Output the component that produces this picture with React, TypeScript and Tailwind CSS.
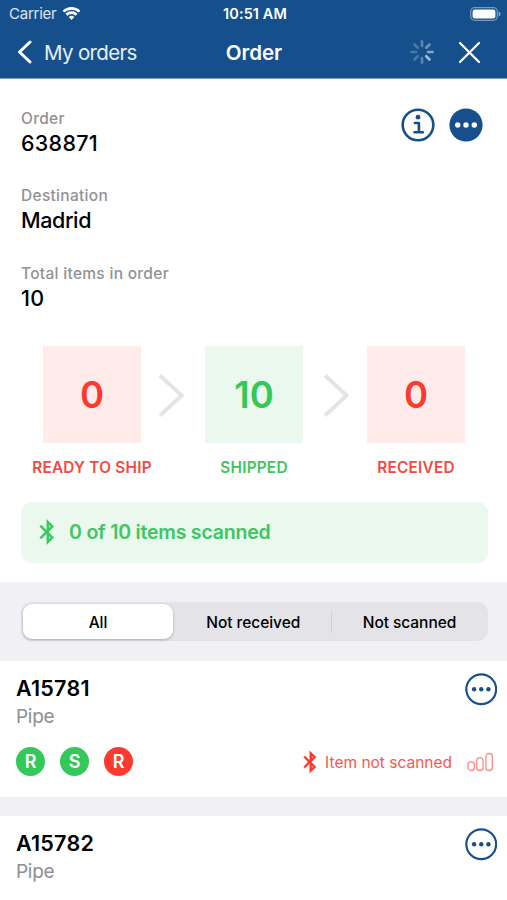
import React from "react";

type Tone = "red" | "green";

function Wifi() {
  return (
    <svg width="19" height="15" viewBox="0 0 20 15" fill="none" stroke="white" strokeWidth="2.7">
      <path d="M1.6 5.6a11.9 11.9 0 0 1 16.8 0" />
      <path d="M4.7 8.8a7.5 7.5 0 0 1 10.6 0" />
      <path d="M10 14.3 7 11.3a4.3 4.3 0 0 1 6 0Z" fill="white" stroke="none" />
    </svg>
  );
}

function Battery() {
  return (
    <svg width="31" height="14" viewBox="0 0 31 14" fill="none">
      <rect x="0.7" y="0.7" width="26.6" height="12.6" rx="4" stroke="white" strokeOpacity="0.42" strokeWidth="1.3" />
      <rect x="2.6" y="2.5" width="22.8" height="9" rx="2.2" fill="white" />
      <path d="M28.7 4.5v5c1.3-.5 1.9-1.3 1.9-2.5S30 5 28.7 4.5Z" fill="white" fillOpacity="0.5" />
    </svg>
  );
}

const SPOKES = [0.3, 0.38, 0.5, 0.62, 0.3, 0.24, 0.24, 0.24];

function Spinner() {
  return (
    <svg width="26" height="26" viewBox="-13 -13 26 26" stroke="white" strokeWidth="2.7" strokeLinecap="round">
      {SPOKES.map((o, i) => (
        <line key={i} x1="0" y1="-6" x2="0" y2="-10.6" strokeOpacity={o} transform={`rotate(${i * 45})`} />
      ))}
    </svg>
  );
}

function Bluetooth({ w, h, color, sw }: { w: number; h: number; color: string; sw: number }) {
  return (
    <svg width={w} height={h} viewBox="0 0 14 24" fill="none" stroke={color} strokeWidth={sw}>
      <path d="M1.2 6.5 11.6 16.9 7.7 20.7V3.3L11.6 7.1 1.2 17.5" />
    </svg>
  );
}

function Dots({ filled, size }: { filled?: boolean; size: number }) {
  const ink = filled ? "white" : "#15508d";
  const pitch = filled ? 8.3 : 7.5;
  return (
    <svg width={size} height={size} viewBox="0 0 34 34">
      <circle cx="17" cy="17" r={filled ? 16.6 : 15.6} fill={filled ? "#15508d" : "none"} stroke="#15508d" strokeWidth={filled ? 0 : 2.3} />
      {[-1, 0, 1].map((n) => (
        <circle key={n} cx={17 + n * pitch} cy="17" r={filled ? 2.7 : 2.3} fill={ink} />
      ))}
    </svg>
  );
}

function Info() {
  return (
    <svg width="34" height="34" viewBox="0 0 34 34" fill="none" stroke="#15508d">
      <circle cx="17" cy="17" r="15.3" strokeWidth="2.6" />
      <circle cx="17" cy="9.2" r="2.4" fill="#15508d" stroke="none" />
      <path d="M13.9 15h4v9.3M13.5 24.3h8.3" strokeWidth="2.6" strokeLinejoin="round" strokeLinecap="round" />
    </svg>
  );
}

function Field({ label, value }: { label: string; value: string }) {
  const numeric = /^\d+$/.test(value);
  return (
    <div className="h-[77.3px]">
      <div className="h-[22px] text-[15.5px] leading-[24px] font-medium tracking-[0.3px] text-[#929292]">{label}</div>
      <div className={`h-7 text-[21.5px] leading-[28px] font-medium text-black ${numeric ? "tracking-[0.3px]" : "tracking-[-0.4px]"}`}>{value}</div>
    </div>
  );
}

function Stage({ value, label, tone }: { value: string; label: string; tone: Tone }) {
  const red = tone === "red";
  return (
    <div className="flex w-[98px] shrink-0 flex-col items-center">
      <div className={`flex h-[97.5px] w-[98px] items-center justify-center pt-[3px] text-[36.5px] font-semibold ${red ? "bg-[#ffebea] text-[#fb3b30]" : "bg-[#eaf8ed] text-[#34c759]"}`}>
        {value}
      </div>
      <div className={`mt-[13px] text-[15.3px] leading-[23px] font-semibold tracking-[0.25px] whitespace-nowrap ${red ? "text-[#f24a41]" : "text-[#3cc65d]"}`}>{label}</div>
    </div>
  );
}

function Arrow({ className }: { className: string }) {
  return (
    <svg className={`mt-[28.5px] shrink-0 ${className}`} width="26" height="43" viewBox="0 0 26 43" fill="none" stroke="#e4e4e7" strokeWidth="3.8">
      <path d="M2 1.5 23.7 21.5 2 41.5" />
    </svg>
  );
}

function Badge({ letter, tone }: { letter: string; tone: Tone }) {
  return (
    <div className={`flex h-[29px] w-[29px] items-center justify-center rounded-full text-[18px] font-semibold text-white ${tone === "red" ? "bg-[#fc3a30]" : "bg-[#34c759]"}`}>
      {letter}
    </div>
  );
}

function Status() {
  return (
    <div className="mt-[18px] flex items-center justify-between pr-[3px]">
      <div className="flex gap-[15px]">
        <Badge letter="R" tone="green" />
        <Badge letter="S" tone="green" />
        <Badge letter="R" tone="red" />
      </div>
      <div className="flex items-center">
        <Bluetooth w={14} h={24} color="#fb3b30" sw={2.4} />
        <span className="ml-2 pt-[2px] text-[15.5px] text-[#f65850]">Item not scanned</span>
        <svg className="ml-[15px]" width="27" height="20" viewBox="0 0 27 20" fill="none" stroke="#fb8b85" strokeWidth="1.3">
          <rect x="1" y="9.8" width="6.4" height="8.7" rx="3.1" />
          <rect x="9.7" y="5.7" width="6.4" height="12.8" rx="3.1" />
          <rect x="18.9" y="1.5" width="6.4" height="17" rx="3.1" />
        </svg>
      </div>
    </div>
  );
}

function Item({ code, status }: { code: string; status?: boolean }) {
  return (
    <section className="h-[136px] shrink-0 bg-white pt-3 pr-[10px] pl-4">
      <div className="flex justify-between">
        <div>
          <div className="h-8 text-[21.5px] leading-[30px] font-semibold tracking-[0.25px] text-black">{code}</div>
          <div className="h-6 text-[19px] leading-6 tracking-[-0.3px] text-[#8e8e93]">Pipe</div>
        </div>
        <Dots size={32.5} />
      </div>
      {status && <Status />}
    </section>
  );
}

export default function App() {
  return (
    <main className="flex h-[900px] w-[507px] flex-col overflow-hidden bg-[#f0f0f5] font-[Inter,'Liberation_Sans',sans-serif]">
      <header className="h-[79px] shrink-0 border-b border-[#7c9fc4] bg-[#15508d] text-white">
        <div className="grid h-[27px] grid-cols-3 items-center pr-[6px] pl-[9px]">
          <div className="flex items-center gap-[6px] text-[15px] tracking-[-0.25px] text-white/85">
            <span className="pt-px">Carrier</span> <Wifi />
          </div>
          <div className="text-center text-[14.5px] font-semibold tracking-[0.1px]">10:51 AM</div>
          <div className="flex justify-end"><Battery /></div>
        </div>
        <div className="grid h-[50px] grid-cols-3 items-center pr-[26px] pl-[17px]">
          <div className="flex items-center gap-3 text-[20.5px] tracking-[-0.65px] text-white/90">
            <svg width="15" height="24" viewBox="0 0 15 24" fill="none" stroke="white" strokeWidth="3" strokeLinecap="round" strokeLinejoin="round">
              <path d="M13 2 2.5 12 13 22" />
            </svg>
            <span className="pt-[2px]">My orders</span>
          </div>
          <div className="pt-[2px] pl-[10px] text-center text-[20.5px] font-semibold">Order</div>
          <div className="flex items-center justify-end gap-[23px]">
            <Spinner />
            <svg width="23" height="23" viewBox="0 0 23 23" stroke="white" strokeWidth="2.2" strokeLinecap="round">
              <path d="m2 2 19 19m0-19-19 19" />
            </svg>
          </div>
        </div>
      </header>

      <section className="h-[503px] shrink-0 bg-white pt-7 pr-[19.5px] pl-[21px]">
        <div className="flex h-[238.5px] justify-between">
          <div>
            <Field label="Order" value="638871" />
            <Field label="Destination" value="Madrid" />
            <Field label="Total items in order" value="10" />
          </div>
          <div className="flex gap-[14px] pt-px pr-[4.5px]">
            <Info />
            <Dots filled size={34} />
          </div>
        </div>
        <div className="flex h-[156.5px] items-start pl-[22px]">
          <Stage value="0" label="READY TO SHIP" tone="red" />
          <Arrow className="mr-[21.5px] ml-[16.5px]" />
          <Stage value="10" label="SHIPPED" tone="green" />
          <Arrow className="mr-[18px] ml-[20px]" />
          <Stage value="0" label="RECEIVED" tone="red" />
        </div>
        <div className="flex h-[60.5px] items-center rounded-[11px] bg-[#eaf8ed] pl-[18px] text-[19.5px] font-semibold tracking-[-0.2px] text-[#3cc762]">
          <Bluetooth w={16} h={28} color="#3cc762" sw={2.2} />
          <span className="ml-[14px] pt-px">0 of 10 items scanned</span>
        </div>
      </section>

      <div className="flex h-[79px] shrink-0 items-center pr-[19.5px] pl-[21px]">
        <div className="flex h-[39px] w-full items-center rounded-[11px] bg-[#e4e3e8] p-[2px] text-[15.5px] font-medium tracking-[-0.05px] text-black">
          <div className="flex h-[35px] w-[150px] items-center justify-center rounded-[9px] bg-white pt-[2px] shadow-[0_1px_3px_rgba(0,0,0,0.25)]">All</div>
          <div className="flex-1 pt-[2px] pl-[3px] text-center">Not received</div>
          <div className="h-[22px] w-px bg-[#d2d1d6]" />
          <div className="w-[154px] pt-[2px] pl-[2px] text-center">Not scanned</div>
        </div>
      </div>

      <Item code="A15781" status />
      <div className="h-[19px] shrink-0" />
      <Item code="A15782" />
    </main>
  );
}
